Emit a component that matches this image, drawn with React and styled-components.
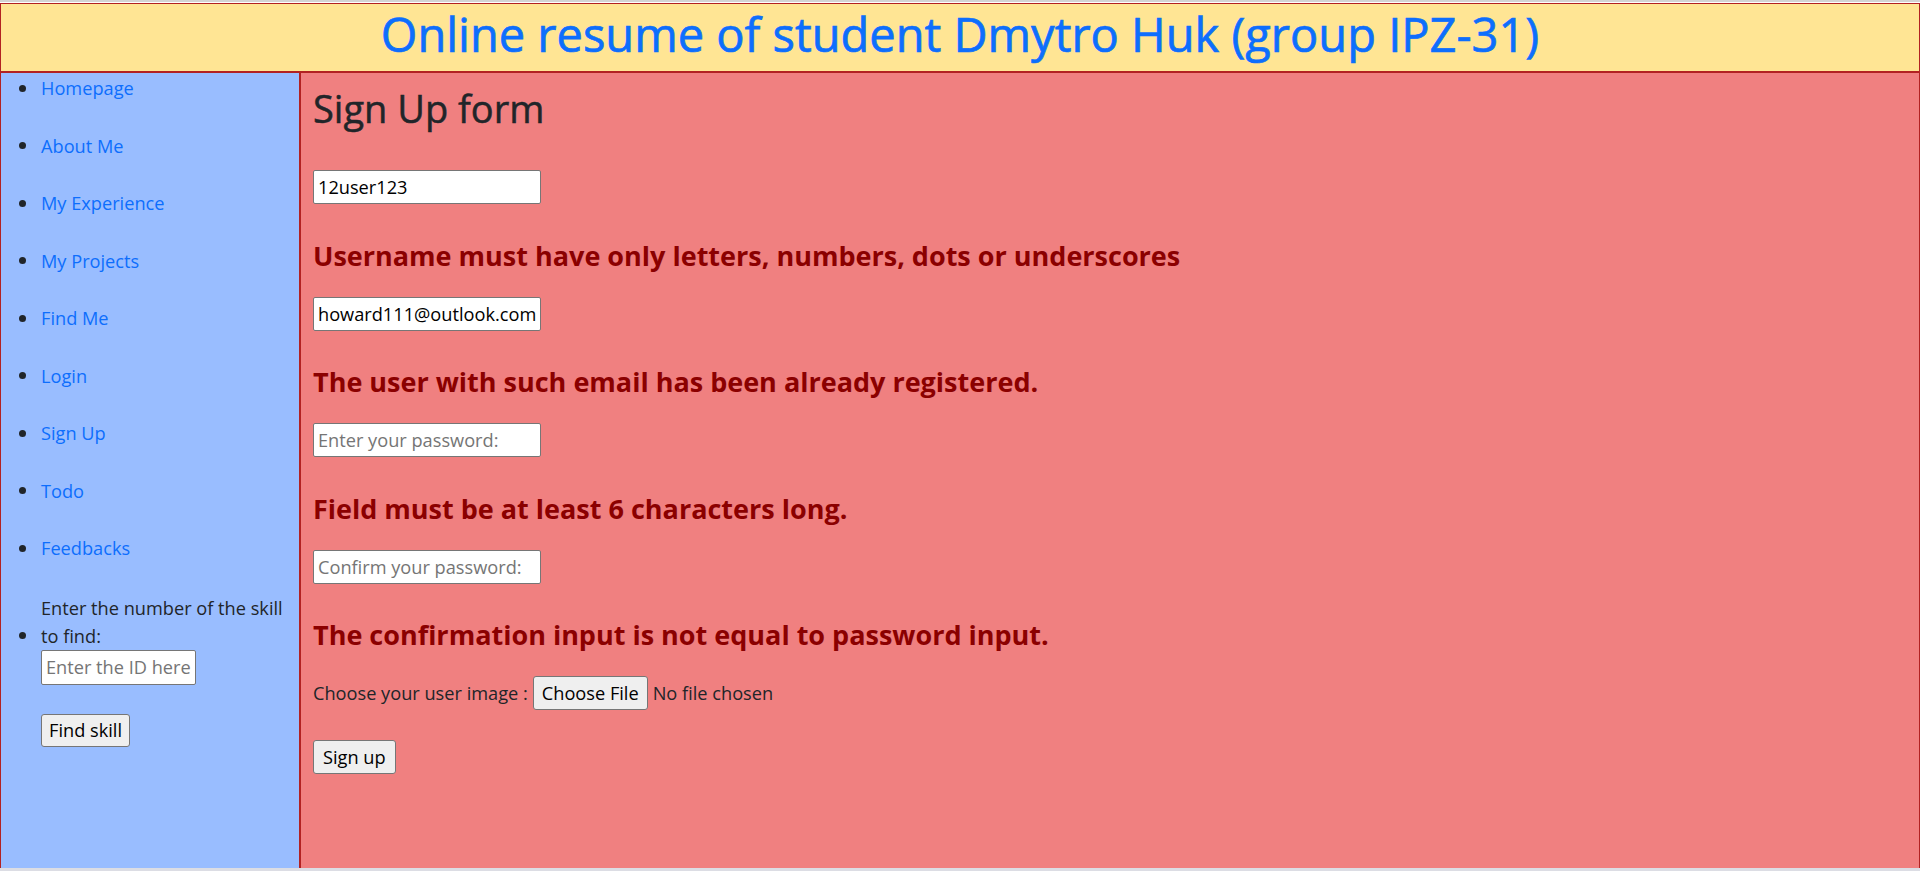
import React from 'react';
import styled, { createGlobalStyle } from 'styled-components';

const GlobalStyle = createGlobalStyle`
  * {
    box-sizing: border-box;
  }
  html, body {
    margin: 0;
    padding: 0;
  }
  body {
    font-family: "Open Sans", "Noto Sans", sans-serif;
    font-size: 18.2px;
    color: #212529;
    background: #fff;
  }
`;

const Page = styled.div`
  height: 100vh;
  display: flex;
  flex-direction: column;
  border-top: 2px solid #d4d4d4;
  padding-top: 1px;
  border-bottom: 3px solid #dcdde4;
`;

const Header = styled.header`
  flex-shrink: 0;
  height: 69px;
  display: flex;
  align-items: center;
  justify-content: center;
  padding-bottom: 7px;
  background: #ffe594;
  border: 1px solid #b22222;
`;

const Title = styled.h1`
  margin: 0;
  font-size: 47px;
  font-weight: 500;
  line-height: 1.2;
  color: #0d6efd;
  -webkit-text-stroke: 0.7px #0d6efd;
`;

const Body = styled.div`
  flex: 1;
  display: flex;
  min-height: 0;
`;

const Sidebar = styled.aside`
  width: 300px;
  flex-shrink: 0;
  background: #99bdff;
  border: 1px solid #b22222;
  border-bottom: none;
`;

const NavList = styled.ul`
  list-style: none;
  margin: 0;
  padding: 0;
  display: flex;
  flex-direction: column;
  gap: 27.5px;
`;

const NavItem = styled.li`
  display: flex;
  align-items: flex-start;
  line-height: 30px;
  margin-top: ${p => p.$offset || 0}px;
`;

const Bullet = styled.span`
  width: 40px;
  flex-shrink: 0;
  height: ${p => p.$lh || 30}px;
  margin-top: ${p => p.$shift || 0}px;
  display: flex;
  align-items: center;

  &::before {
    content: "";
    width: 7px;
    height: 7px;
    margin-left: 18px;
    border-radius: 50%;
    background: #212529;
  }
`;

const NavLink = styled.a`
  color: #0d6efd;
  text-decoration: none;
`;

const SkillForm = styled.form`
  line-height: 28px;
  margin: 0;
`;

const TextInput = styled.input`
  display: block;
  width: ${p => p.$w}px;
  height: ${p => p.$h}px;
  margin: 0;
  padding: 0 4px;
  font: inherit;
  font-size: 18.2px;
  line-height: normal;
  color: #000;
  background: #fff;
  border: 1px solid #767676;
  border-radius: 2px;

  &::placeholder {
    color: #757575;
  }
`;

const Button = styled.button`
  display: block;
  height: ${p => p.$h || 34}px;
  margin: ${p => p.$mt || 0}px 0 0;
  padding: 0 ${p => p.$px || 8}px;
  font-family: inherit;
  font-size: 18.2px;
  color: #000;
  background: #efefef;
  border: 1px solid #767676;
  border-radius: 3px;
`;

const Main = styled.main`
  flex: 1;
  background: #f08080;
  border: 1px solid #b22222;
  border-bottom: none;
  padding: 13px 12px;
`;

const FormTitle = styled.h2`
  margin: 0 0 39px;
  font-size: 38px;
  font-weight: 500;
  line-height: 45px;
  color: #212529;
  -webkit-text-stroke: 0.5px #212529;
`;

const SignUpForm = styled.form`
  display: flex;
  flex-direction: column;
  align-items: flex-start;
`;

const ErrorText = styled.h5`
  margin: 35.5px 0 25px;
  font-size: 27px;
  font-weight: 700;
  line-height: 32px;
  color: #8b0000;
`;

const FileRow = styled.div`
  display: flex;
  align-items: center;
  gap: 5px;
  height: 34px;
  line-height: 30px;
`;

const navLinks = [
  'Homepage',
  'About Me',
  'My Experience',
  'My Projects',
  'Find Me',
  'Login',
  'Sign Up',
  'Todo',
  'Feedbacks',
];

const fields = [
  { type: 'text', value: '12user123', error: 'Username must have only letters, numbers, dots or underscores' },
  { type: 'email', value: 'howard111@outlook.com', error: 'The user with such email has been already registered.' },
  { type: 'password', placeholder: 'Enter your password:', error: 'Field must be at least 6 characters long.' },
  { type: 'password', placeholder: 'Confirm your password:', error: 'The confirmation input is not equal to password input.' },
];

const App = () => {
  return (
    <>
      <GlobalStyle />
      <Page>
        <Header>
          <Title>Online resume of student Dmytro Huk (group IPZ-31)</Title>
        </Header>

        <Body>
          <Sidebar>
            <NavList>
              {navLinks.map(link => (
                <NavItem key={link}>
                  <Bullet />
                  <NavLink href="#">{link}</NavLink>
                </NavItem>
              ))}
              <NavItem $offset={3}>
                <Bullet $lh={28} $shift={28} />
                <SkillForm onSubmit={e => e.preventDefault()}>
                  Enter the number of the skill<br />
                  to find:
                  <TextInput $w={155} $h={35} placeholder="Enter the ID here" />
                  <Button $h={33} $px={7} $mt={29}>Find skill</Button>
                </SkillForm>
              </NavItem>
            </NavList>
          </Sidebar>

          <Main>
            <FormTitle>Sign Up form</FormTitle>
            <SignUpForm onSubmit={e => e.preventDefault()}>
              {fields.map(field => (
                <React.Fragment key={field.error}>
                  <TextInput
                    $w={228}
                    $h={34}
                    type={field.type}
                    defaultValue={field.value}
                    placeholder={field.placeholder}
                  />
                  <ErrorText>{field.error}</ErrorText>
                </React.Fragment>
              ))}
              <FileRow>
                <span>Choose your user image :</span>
                <Button type="button" $px={8}>Choose File</Button>
                <span>No file chosen</span>
              </FileRow>
              <Button $mt={30} $px={9}>Sign up</Button>
            </SignUpForm>
          </Main>
        </Body>
      </Page>
    </>
  );
};

export default App;
